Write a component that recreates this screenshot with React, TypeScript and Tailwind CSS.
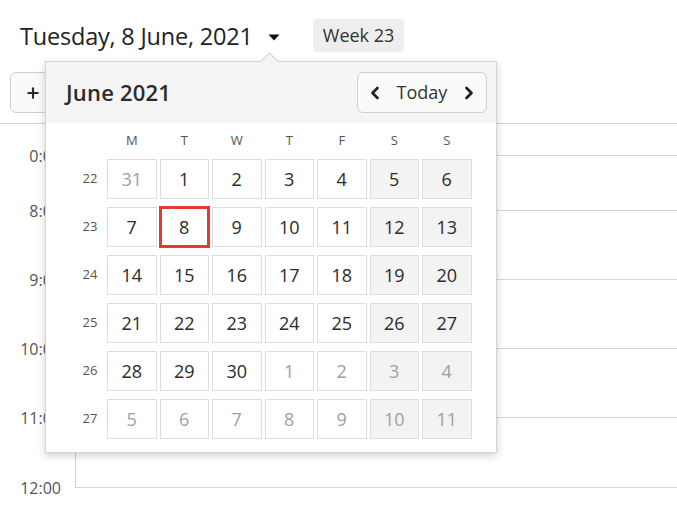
import React from 'react';
import { ChevronLeft, ChevronRight, Plus } from 'lucide-react';

const font = { fontFamily: '"Open Sans", "Noto Sans", sans-serif' };

const weekdays = ['M', 'T', 'W', 'T', 'F', 'S', 'S'];

interface Day {
  n: number;
  muted?: boolean;
}

const weeks: { wk: number; days: Day[] }[] = [
  { wk: 22, days: [{ n: 31, muted: true }, { n: 1 }, { n: 2 }, { n: 3 }, { n: 4 }, { n: 5 }, { n: 6 }] },
  { wk: 23, days: [{ n: 7 }, { n: 8 }, { n: 9 }, { n: 10 }, { n: 11 }, { n: 12 }, { n: 13 }] },
  { wk: 24, days: [{ n: 14 }, { n: 15 }, { n: 16 }, { n: 17 }, { n: 18 }, { n: 19 }, { n: 20 }] },
  { wk: 25, days: [{ n: 21 }, { n: 22 }, { n: 23 }, { n: 24 }, { n: 25 }, { n: 26 }, { n: 27 }] },
  { wk: 26, days: [{ n: 28 }, { n: 29 }, { n: 30 }, { n: 1, muted: true }, { n: 2, muted: true }, { n: 3, muted: true }, { n: 4, muted: true }] },
  { wk: 27, days: [5, 6, 7, 8, 9, 10, 11].map((n) => ({ n, muted: true })) },
];

// hour rows: height of each slot (px) and the label drawn on its bottom line
const slots = [
  { h: 32, label: '0:00' },
  { h: 55, label: '8:00' },
  { h: 69, label: '9:00' },
  { h: 69, label: '10:00' },
  { h: 69, label: '11:00' },
  { h: 70, label: '12:00' },
];

const DatePopup: React.FC = () => {
  return (
    <div className="absolute left-[45px] top-[61px] w-[452px] bg-white border border-[#d4d4d4] shadow-[0_3px_8px_rgba(0,0,0,0.18)]">
      {/* pointer */}
      <div className="absolute left-[217px] -top-[7px] w-[13px] h-[13px] rotate-45 bg-[#f5f5f5] border-l border-t border-[#d4d4d4]" />
      <div className="relative flex items-center justify-between h-[61px] bg-[#f5f5f5] pl-5 pr-[9px]">
        <span className="text-[22px] font-semibold text-[#2b2b2b] tracking-[0.2px]">June 2021</span>
        <div className="flex items-center h-[41px] w-[130px] rounded-md border border-[#cfcfcf] bg-[#fafafa] px-[7px] justify-between text-[#222]">
          <ChevronLeft size={20} strokeWidth={3.2} />
          <span className="text-[18px] text-[#333]">Today</span>
          <ChevronRight size={20} strokeWidth={3.2} />
        </div>
      </div>
      <div className="pl-[26px] pr-[25px] pb-[13px]">
        <div className="grid grid-cols-[32px_repeat(7,49.5px)] gap-x-[3px] h-[36px] items-center">
          <span />
          {weekdays.map((d, i) => (
            <span key={i} className="text-center text-[13px] text-[#555]">
              {d}
            </span>
          ))}
        </div>
        <div className="grid grid-cols-[32px_repeat(7,49.5px)] gap-x-[3px] gap-y-[8px]">
          {weeks.map((w) => (
            <React.Fragment key={w.wk}>
              <span className="flex items-center justify-center text-[13px] text-[#555] pl-[4px]">{w.wk}</span>
              {w.days.map((d, i) => {
                const weekend = i >= 5;
                const today = w.wk === 23 && d.n === 8;
                return (
                  <div
                    key={i}
                    className={`flex items-center justify-center h-[40px] text-[18px] ${
                      today
                        ? 'border-2 border-[#e53935] shadow-[0_0_0_1px_#e53935]'
                        : 'border border-[#dedede]'
                    } ${weekend ? 'bg-[#f3f3f3]' : 'bg-white'} ${d.muted ? 'text-[#a0a0a0]' : 'text-[#2b2b2b]'}`}
                  >
                    {d.n}
                  </div>
                );
              })}
            </React.Fragment>
          ))}
        </div>
      </div>
    </div>
  );
};

export default function App() {
  return (
    <div className="relative w-[677px] h-[507px] overflow-hidden bg-white text-[#2b2b2b]" style={font}>
      <div className="flex items-center pl-5 pt-[19px] h-[52px]">
        <span className="text-[23.5px] text-[#222] tracking-[-0.2px] translate-y-[1px]">Tuesday, 8 June, 2021</span>
        <svg width="12" height="8" viewBox="0 0 12 8" className="ml-[15px] mt-[2px]">
          <path d="M0.5 1.5 L11.5 1.5 L6 7.5 Z" fill="#111" />
        </svg>
        <span className="ml-[33px] flex items-center h-[33px] px-[10px] rounded bg-[#eeeeee] text-[18px] text-[#333]">
          Week 23
        </span>
      </div>
      <div className="flex pl-[10px] pt-[20px] pb-[10px] border-b border-[#cfcfcf]">
        <button className="flex items-center h-[41px] w-[90px] rounded-md border border-[#cfcfcf] bg-[#fafafa] pl-[14px]">
          <Plus size={16} strokeWidth={3.2} />
        </button>
      </div>
      <div className="flex">
        <div className="w-[76px] border-r border-[#cfcfcf] shrink-0">
          {slots.map((s, i) => (
            <div key={i} className="flex items-end justify-end pr-[14px]" style={{ height: s.h }}>
              <span className="text-[16px] text-[#555] leading-none translate-y-[8px]">{s.label}</span>
            </div>
          ))}
        </div>
        <div className="flex-1">
          {slots.map((s, i) => (
            <div key={i} className="border-b border-[#d6d6d6]" style={{ height: s.h }} />
          ))}
        </div>
      </div>
      <DatePopup />
    </div>
  );
}
